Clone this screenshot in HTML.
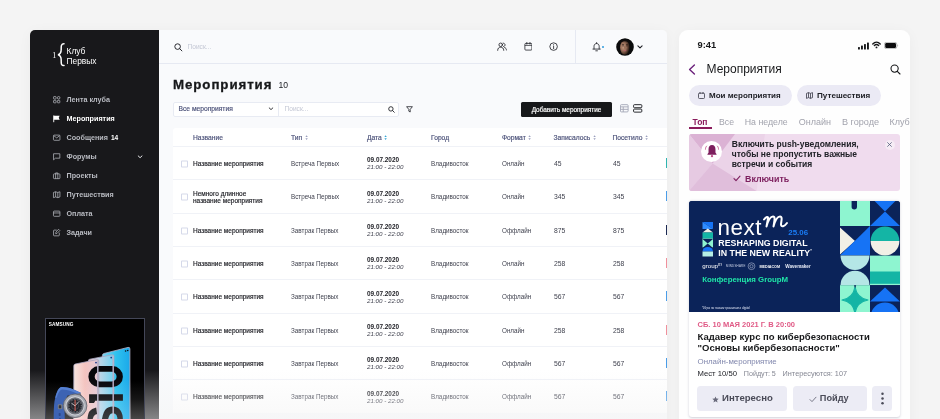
<!DOCTYPE html>
<html lang="ru">
<head>
<meta charset="utf-8">
<title>Мероприятия</title>
<style>
*{box-sizing:border-box;margin:0;padding:0}
html,body{width:940px;height:419px;overflow:hidden}
body{background:#f4f4f4;font-family:"Liberation Sans",sans-serif;position:relative;color:#17181a}
.a{position:absolute;white-space:nowrap}
.b{font-weight:bold}
/* sidebar */
#side{position:absolute;left:30px;top:30px;width:129px;height:389px;background:#18181b;border-radius:5px 0 0 0;overflow:hidden}
#side .mi{position:absolute;left:36.5px;font-size:7.2px;line-height:10px;font-weight:bold;color:#b9bbc2;white-space:nowrap}
#side .mi.on{color:#fff}
#side svg.ic{position:absolute;left:22.7px;width:7.4px;height:7.4px;overflow:visible;margin-top:0.3px}
/* main */
#main{position:absolute;left:159px;top:30px;width:508px;height:389px;background:#f9fafc;border-radius:0 5px 0 0;overflow:hidden}
#shd1{position:absolute;left:30px;top:30px;width:637px;height:400px;border-radius:5px 5px 0 0;box-shadow:0 2px 14px rgba(0,0,0,0.04)}
#shd2{position:absolute;left:679px;top:30px;width:231px;height:400px;border-radius:9px 9px 0 0;box-shadow:0 2px 14px rgba(0,0,0,0.04)}
#hdr{position:absolute;left:0;top:0;width:508px;height:33.5px;border-bottom:1px solid #e6e9f2}
#tbl{position:absolute;left:14px;top:98px;width:500px;height:285px;background:#fff;border-radius:3px 0 0 0}
.th{position:absolute;top:5px;font-size:6.7px;line-height:9px;color:#4a5078;white-space:nowrap;-webkit-text-stroke:0.16px #4a5078}
.th i{font-style:normal;color:#8a90b0;font-size:5px;margin-left:2px;position:relative;top:-0.5px}
.row{position:absolute;left:0;width:500px;height:33.4px;border-top:1px solid #f0f2f7}
.row .cb{position:absolute;left:8px;top:13px;transform:translateY(0.5px) rotate(0.02deg);width:6.5px;height:6.5px;border:0.8px solid #d5d9ea;border-radius:1px;background:#fff}
.row .c{position:absolute;font-size:6.3px;line-height:9px;white-space:nowrap;color:#3d3f4c;top:10.9px;transform:translateY(0.85px) rotate(0.02deg)}
.row .n{left:20px;color:#202127;font-size:6.5px;-webkit-text-stroke:0.16px #202127}
.row .n2{top:9px;line-height:7px}
.row .t{left:118px}
.row .d{left:194px;top:8.2px;line-height:7px}
.row .d b{color:#202127;font-size:6.4px}
.row .d span{font-size:6.2px;font-style:italic}
.row .g{left:258px}
.row .f{left:329px}
.row .z{left:380.5px;font-size:6.8px}
.row .p{left:439.5px;font-size:6.8px}
.row .bar{position:absolute;left:492.5px;top:11px;width:3px;height:10px}
/* mobile */
#mob{position:absolute;left:679px;top:30px;width:231px;height:400px;background:#fefefe;border-radius:9px 9px 0 0;overflow:hidden}
</style>
</head>
<body>
<div id="root" style="position:absolute;left:0;top:0;width:940px;height:419px;overflow:hidden;will-change:transform">
<div id="shd1"></div><div id="shd2"></div>
<div id="side">
<div class="a" style="left:22.3px;top:20.5px;font-family:'Liberation Serif',serif;font-size:8px;line-height:10px;color:#fff">1</div>
<svg class="a" style="left:26.6px;top:12.8px" width="8" height="24" viewBox="0 0 8 24"><path d="M7 0.8 C3.8 0.8 4.2 3.5 4.2 6.3 C4.2 9.3 3.8 11.1 1 11.7 C3.8 12.3 4.2 14.1 4.2 17.1 C4.2 19.9 3.8 22.6 7 22.6" fill="none" stroke="#fff" stroke-width="1.5" stroke-linecap="round"/></svg>
<div class="a" style="left:36.5px;top:15.5px;font-size:8.4px;line-height:10px;color:#fff">Клуб<br>Первых</div>

<svg class="ic" style="top:65.5px" viewBox="0 0 8 8"><g fill="none" stroke="#b9bbc2" stroke-width="0.8"><rect x="0.6" y="0.6" width="2.7" height="2.7" rx="0.6"/><circle cx="6.1" cy="1.95" r="1.4"/><rect x="0.6" y="4.7" width="2.7" height="2.7" rx="0.6"/><rect x="4.7" y="4.7" width="2.7" height="2.7" rx="0.6"/></g></svg>
<div class="mi" style="top:64.5px">Лента клуба</div>

<svg class="ic" style="top:84.5px" viewBox="0 0 8 8"><path d="M0.8 0.5 V7.8" stroke="#fff" stroke-width="1" fill="none"/><path d="M0.8 0.8 H7.2 L6.2 3 L7.2 5.2 H0.8 Z" fill="#fff"/></svg>
<div class="mi on" style="top:83.5px">Мероприятия</div>

<svg class="ic" style="top:103.5px" viewBox="0 0 8 8"><g fill="none" stroke="#b9bbc2" stroke-width="0.8"><rect x="0.5" y="1.2" width="7" height="5.6" rx="0.8"/><path d="M0.8 1.8 L4 4.2 L7.2 1.8"/></g></svg>
<div class="mi" style="top:102.5px">Сообщения <span style="color:#fff;font-size:6.6px;margin-left:1px">14</span></div>

<svg class="ic" style="top:122.5px" viewBox="0 0 8 8"><path d="M0.6 0.8 H7.4 V5.6 H2.6 L0.6 7.4 Z" fill="none" stroke="#b9bbc2" stroke-width="0.8" stroke-linejoin="round"/></svg>
<div class="mi" style="top:121.5px">Форумы</div>
<svg class="a" style="left:107px;top:124.7px" width="6" height="4" viewBox="0 0 6 4"><path d="M1.2 0.9 L3.1 2.7 L5 0.9" fill="none" stroke="#e6e7ea" stroke-width="1" stroke-linecap="round" stroke-linejoin="round"/></svg>

<svg class="ic" style="top:141.5px" viewBox="0 0 8 8"><g fill="none" stroke="#b9bbc2" stroke-width="0.8"><rect x="0.5" y="2" width="7" height="5.2" rx="0.8"/><path d="M2.8 2 V1 H5.2 V2 M2.8 2 V7.2 M5.2 2 V7.2"/></g></svg>
<div class="mi" style="top:140.5px">Проекты</div>

<svg class="ic" style="top:160.5px" viewBox="0 0 8 8"><g fill="none" stroke="#b9bbc2" stroke-width="0.8" stroke-linejoin="round"><path d="M0.5 1.6 L2.8 0.8 L5.2 1.6 L7.5 0.8 V6.4 L5.2 7.2 L2.8 6.4 L0.5 7.2 Z"/><path d="M2.8 0.8 V6.4 M5.2 1.6 V7.2"/></g></svg>
<div class="mi" style="top:159.5px">Путешествия</div>

<svg class="ic" style="top:179.5px" viewBox="0 0 8 8"><g fill="none" stroke="#b9bbc2" stroke-width="0.8"><rect x="0.5" y="1.2" width="7" height="5.6" rx="0.8"/><path d="M0.5 3.2 H7.5"/></g></svg>
<div class="mi" style="top:178.5px">Оплата</div>

<svg class="ic" style="top:198.5px" viewBox="0 0 8 8"><g fill="none" stroke="#b9bbc2" stroke-width="0.8" stroke-linejoin="round" stroke-linecap="round"><path d="M3.6 1.2 H1.3 Q0.6 1.2 0.6 1.9 V6.7 Q0.6 7.4 1.3 7.4 H6.1 Q6.8 7.4 6.8 6.7 V4.4"/><path d="M6.3 0.6 L7.4 1.7 L4.2 4.9 L2.9 5.1 L3.1 3.8 Z"/></g></svg>
<div class="mi" style="top:197.5px">Задачи</div>

</div>
<div id="main">
<div id="hdr">
<svg class="a" style="left:14.5px;top:12.5px" width="9" height="9" viewBox="0 0 9 9"><circle cx="3.6" cy="3.6" r="2.8" fill="none" stroke="#202127" stroke-width="0.95"/><path d="M5.7 5.7 L7.9 7.9" stroke="#202127" stroke-width="0.95" stroke-linecap="round"/></svg>
<div class="a" style="left:28.5px;top:12px;font-size:6.6px;line-height:10px;color:#c3c7d4">Поиск...</div>
<!-- users -->
<svg class="a" style="left:337.8px;top:12px" width="10.2" height="9.3" viewBox="0 0 11 10"><g fill="none" stroke="#202127" stroke-width="0.9" stroke-linecap="round"><circle cx="4" cy="3" r="1.9"/><path d="M0.7 9 C0.7 6.6 2.2 5.6 4 5.6 C5.8 5.6 7.3 6.6 7.3 9"/><path d="M6.6 1.2 C7.9 1.3 8.7 2.1 8.7 3.1 C8.7 4.1 7.9 4.8 7 4.9"/><path d="M8.2 5.9 C9.5 6.3 10.2 7.3 10.2 8.6"/></g></svg>
<!-- calendar -->
<svg class="a" style="left:364.6px;top:12px" width="8.8" height="8.8" viewBox="0 0 10 10"><g fill="none" stroke="#202127" stroke-width="0.9"><rect x="1" y="1.6" width="8" height="7.6" rx="1"/><path d="M1 3.9 H9" stroke-width="0.8"/><path d="M3.2 0.5 V2.4 M6.8 0.5 V2.4" stroke-linecap="round"/></g></svg>
<!-- info -->
<svg class="a" style="left:390.4px;top:12px" width="9.2" height="9.2" viewBox="0 0 10 10"><circle cx="5" cy="5" r="4.1" fill="none" stroke="#202127" stroke-width="0.9"/><path d="M5 4.5 V7.2" stroke="#202127" stroke-width="0.9" stroke-linecap="round"/><circle cx="5" cy="3" r="0.55" fill="#202127"/></svg>
<div class="a" style="left:416px;top:0;width:1px;height:33px;background:#e6e9f2"></div>
<!-- bell -->
<svg class="a" style="left:433.3px;top:11.6px" width="9.2" height="10.1" viewBox="0 0 10 11"><g fill="none" stroke="#202127" stroke-width="0.9" stroke-linecap="round" stroke-linejoin="round"><path d="M2.2 7.6 V4.6 C2.2 2.9 3.4 1.7 5 1.7 C6.6 1.7 7.8 2.9 7.8 4.6 V7.6"/><path d="M1 7.7 H9"/><path d="M5 0.6 V1.6"/><path d="M4.1 9.6 H5.9"/></g></svg>
<div class="a" style="left:442.5px;top:15.5px;width:2.4px;height:2.4px;border-radius:50%;background:#2f9bdc"></div>
<!-- avatar -->
<svg class="a" style="left:455.7px;top:6.8px" width="20" height="20" viewBox="0 0 20 20"><defs><clipPath id="avc"><circle cx="10" cy="10" r="8.8"/></clipPath><radialGradient id="avg" cx="0.36" cy="0.45" r="0.62"><stop offset="0" stop-color="#c49a80"/><stop offset="0.45" stop-color="#9a705a"/><stop offset="0.8" stop-color="#4e3529"/><stop offset="1" stop-color="#1a120e"/></radialGradient></defs><circle cx="10" cy="10" r="9.4" fill="#fff"/><circle cx="10" cy="10" r="8.8" fill="#0b0b0c"/><g clip-path="url(#avc)"><ellipse cx="9.9" cy="10.6" rx="4.9" ry="7.2" fill="url(#avg)"/><path d="M4.8 7 C4.6 1.6 15.2 1.6 15 7 C14 3.4 5.8 3.4 4.8 7 Z" fill="#0f0c0b"/><path d="M7 7.9 C7.6 7.5 8.6 7.5 9.1 7.9 M10.9 7.9 C11.4 7.5 12.4 7.5 13 7.9" stroke="#1f1410" stroke-width="0.7" fill="none"/><ellipse cx="8.1" cy="8.9" rx="0.9" ry="0.45" fill="#22150f"/><ellipse cx="11.9" cy="8.9" rx="0.9" ry="0.45" fill="#22150f"/><path d="M9.9 9 V11.6" stroke="#6a4636" stroke-width="0.6"/><ellipse cx="9.9" cy="13.6" rx="1.5" ry="0.7" fill="#b2606a"/></g></svg>
<svg class="a" style="left:478.4px;top:14.9px" width="6" height="4" viewBox="0 0 6 4"><path d="M0.9 0.8 L3 2.9 L5.1 0.8" fill="none" stroke="#202127" stroke-width="1.1" stroke-linecap="round" stroke-linejoin="round"/></svg>
</div>
<div class="a b" style="left:14px;top:45.7px;font-size:13.3px;line-height:18px;color:#17181a;letter-spacing:0.92px;-webkit-text-stroke:0.3px #17181a">Мероприятия</div>
<div class="a" style="left:119.5px;top:49px;font-size:8.6px;line-height:12px;color:#202127">10</div>
<!-- filters -->
<div class="a" style="left:14px;top:71.5px;width:226px;height:15px;background:#fff;border:1px solid #e8ebf3;border-radius:2px"></div>
<div class="a" style="left:119px;top:71.5px;width:1px;height:15px;background:#e8ebf3"></div>
<div class="a" style="left:19.5px;top:73.8px;font-size:6.7px;line-height:9px;color:#4a5078;-webkit-text-stroke:0.16px #4a5078">Все мероприятия</div>
<svg class="a" style="left:108.5px;top:77.3px" width="6" height="4" viewBox="0 0 6 4"><path d="M1.2 0.9 L3 2.6 L4.8 0.9" fill="none" stroke="#202127" stroke-width="0.9" stroke-linecap="round" stroke-linejoin="round"/></svg>
<div class="a" style="left:125.5px;top:74px;font-size:6.6px;line-height:10px;color:#c3c7d4">Поиск...</div>
<svg class="a" style="left:228.5px;top:75.5px" width="7" height="7" viewBox="0 0 7 7"><circle cx="2.9" cy="2.9" r="2.2" fill="none" stroke="#202127" stroke-width="0.9"/><path d="M4.6 4.6 L6.3 6.3" stroke="#202127" stroke-width="0.9" stroke-linecap="round"/></svg>
<svg class="a" style="left:247px;top:75.5px" width="7" height="7" viewBox="0 0 7 7"><path d="M0.6 0.7 H6.4 L4.2 3.4 V6 L2.8 5.2 V3.4 Z" fill="none" stroke="#202127" stroke-width="0.8" stroke-linejoin="round"/></svg>
<div class="a" style="left:362px;top:72px;width:91px;height:14.5px;background:#17181a;border-radius:1.5px"></div>
<div class="a" style="left:362px;top:74.7px;width:91px;text-align:center;font-size:6.45px;line-height:9px;color:#fff;-webkit-text-stroke:0.18px #fff">Добавить мероприятие</div>
<svg class="a" style="left:461.3px;top:74.2px" width="8.6" height="8.6" viewBox="0 0 9 9"><g fill="none" stroke="#a3a7b6" stroke-width="0.95"><rect x="0.5" y="0.7" width="8" height="7.6" rx="1"/><path d="M0.5 3 H8.5 M0.5 5.6 H8.5 M3.4 3 V8.3"/></g></svg>
<svg class="a" style="left:474.3px;top:74px" width="9.6" height="8.8" viewBox="0 0 10 9"><g fill="none" stroke="#202127" stroke-width="1"><rect x="0.6" y="0.6" width="8.6" height="3.2" rx="0.9"/><rect x="0.6" y="5.2" width="8.6" height="3.2" rx="0.9"/></g></svg>

<div id="tbl">
<div class="th" style="left:20px">Название</div>
<div class="th" style="left:118px">Тип<svg width="3.2" height="5.2" viewBox="0 0 3.2 6" style="margin-left:2.6px;position:relative;top:0.4px"><path d="M1.6 0.3 L3 2.3 H0.2 Z M1.6 5.7 L3 3.7 H0.2 Z" fill="#9a9fbd"/></svg></div>
<div class="th" style="left:194px">Дата<svg width="3.2" height="5.2" viewBox="0 0 3.2 6" style="margin-left:2.6px;position:relative;top:0.4px"><path d="M1.6 0.3 L3 2.3 H0.2 Z M1.6 5.7 L3 3.7 H0.2 Z" fill="#35a5d5"/></svg></div>
<div class="th" style="left:258px">Город</div>
<div class="th" style="left:329px">Формат<svg width="3.2" height="5.2" viewBox="0 0 3.2 6" style="margin-left:2.6px;position:relative;top:0.4px"><path d="M1.6 0.3 L3 2.3 H0.2 Z M1.6 5.7 L3 3.7 H0.2 Z" fill="#9a9fbd"/></svg></div>
<div class="th" style="left:380.5px">Записалось<svg width="3.2" height="5.2" viewBox="0 0 3.2 6" style="margin-left:2.6px;position:relative;top:0.4px"><path d="M1.6 0.3 L3 2.3 H0.2 Z M1.6 5.7 L3 3.7 H0.2 Z" fill="#9a9fbd"/></svg></div>
<div class="th" style="left:439.5px">Посетило<svg width="3.2" height="5.2" viewBox="0 0 3.2 6" style="margin-left:2.6px;position:relative;top:0.4px"><path d="M1.6 0.3 L3 2.3 H0.2 Z M1.6 5.7 L3 3.7 H0.2 Z" fill="#9a9fbd"/></svg></div>
<div class="row" style="top:18.00px"><div class="cb"></div><div class="c n">Название мероприятия</div><div class="c t">Встреча Первых</div><div class="c d"><b>09.07.2020</b><br><span>21:00 - 22:00</span></div><div class="c g">Владивосток</div><div class="c f">Онлайн</div><div class="c z">45</div><div class="c p">45</div><div class="bar" style="background:#2fb5b0"></div></div>
<div class="row" style="top:51.35px"><div class="cb"></div><div class="c n n2">Немного длинное<br>название мероприятия</div><div class="c t">Встреча Первых</div><div class="c d"><b>09.07.2020</b><br><span>21:00 - 22:00</span></div><div class="c g">Владивосток</div><div class="c f">Онлайн</div><div class="c z">345</div><div class="c p">345</div><div class="bar" style="background:#4a9de8"></div></div>
<div class="row" style="top:84.70px"><div class="cb"></div><div class="c n">Название мероприятия</div><div class="c t">Завтрак Первых</div><div class="c d"><b>09.07.2020</b><br><span>21:00 - 22:00</span></div><div class="c g">Владивосток</div><div class="c f">Оффлайн</div><div class="c z">875</div><div class="c p">875</div><div class="bar" style="background:#1c2a52"></div></div>
<div class="row" style="top:118.05px"><div class="cb"></div><div class="c n">Название мероприятия</div><div class="c t">Завтрак Первых</div><div class="c d"><b>09.07.2020</b><br><span>21:00 - 22:00</span></div><div class="c g">Владивосток</div><div class="c f">Онлайн</div><div class="c z">258</div><div class="c p">258</div><div class="bar" style="background:#f0909c"></div></div>
<div class="row" style="top:151.40px"><div class="cb"></div><div class="c n">Название мероприятия</div><div class="c t">Завтрак Первых</div><div class="c d"><b>09.07.2020</b><br><span>21:00 - 22:00</span></div><div class="c g">Владивосток</div><div class="c f">Оффлайн</div><div class="c z">567</div><div class="c p">567</div><div class="bar" style="background:#4a9de8"></div></div>
<div class="row" style="top:184.75px"><div class="cb"></div><div class="c n">Название мероприятия</div><div class="c t">Завтрак Первых</div><div class="c d"><b>09.07.2020</b><br><span>21:00 - 22:00</span></div><div class="c g">Владивосток</div><div class="c f">Онлайн</div><div class="c z">258</div><div class="c p">258</div><div class="bar" style="background:#f0909c"></div></div>
<div class="row" style="top:218.10px"><div class="cb"></div><div class="c n">Название мероприятия</div><div class="c t">Завтрак Первых</div><div class="c d"><b>09.07.2020</b><br><span>21:00 - 22:00</span></div><div class="c g">Владивосток</div><div class="c f">Оффлайн</div><div class="c z">567</div><div class="c p">567</div><div class="bar" style="background:#4a9de8"></div></div>
<div class="row" style="top:251.45px"><div class="cb"></div><div class="c n">Название мероприятия</div><div class="c t">Завтрак Первых</div><div class="c d"><b>09.07.2020</b><br><span>21:00 - 22:00</span></div><div class="c g">Владивосток</div><div class="c f">Оффлайн</div><div class="c z">567</div><div class="c p">567</div><div class="bar" style="background:#4a9de8"></div></div>
</div>
</div>
<div class="a" id="fade" style="left:30px;top:370px;width:637px;height:49px;background:linear-gradient(to bottom,rgba(243,243,243,0) 0%,rgba(243,243,243,0.5) 100%)"></div>
<div class="a" id="ad" style="left:45px;top:318.3px;width:99.5px;height:110px;background:linear-gradient(to bottom,#000 0,#000 62px,#161616 80px,#4a4a4a 101px);border:0.6px solid #444758;border-bottom:0;overflow:hidden">
<svg class="a" style="left:-0.6px;top:-0.6px" width="99.5" height="102" viewBox="0 0 99.5 102">
<defs>
<linearGradient id="scr1" x1="0" y1="0" x2="1" y2="0"><stop offset="0" stop-color="#f6e4df"/><stop offset="0.45" stop-color="#f4c3bf"/><stop offset="1" stop-color="#e3c9d6"/></linearGradient>
<linearGradient id="scr2" x1="0" y1="0" x2="1" y2="0"><stop offset="0" stop-color="#efc3c6"/><stop offset="0.45" stop-color="#bcd6e8"/><stop offset="1" stop-color="#6fd2f0"/></linearGradient>
<linearGradient id="scr3" x1="0" y1="0" x2="1" y2="0"><stop offset="0" stop-color="#7fd6f1"/><stop offset="0.5" stop-color="#2fc2ee"/><stop offset="1" stop-color="#1aa8ea"/></linearGradient>
<radialGradient id="wf" cx="0.5" cy="0.5" r="0.5"><stop offset="0" stop-color="#3a3d46"/><stop offset="0.58" stop-color="#2a2c33"/><stop offset="0.62" stop-color="#b9bcc4"/><stop offset="0.85" stop-color="#8b8e97"/><stop offset="1" stop-color="#5a5d66"/></radialGradient>
<linearGradient id="wfade" x1="0" y1="0" x2="0" y2="1"><stop offset="0" stop-color="#fff" stop-opacity="0"/><stop offset="1" stop-color="#fff" stop-opacity="0.22"/></linearGradient>
</defs>
<text x="3.7" y="7" font-family="Liberation Sans, sans-serif" font-size="4.7" font-weight="bold" fill="#fff" letter-spacing="0.12">SAMSUNG</text>
<!-- phone 3 -->
<path d="M57.4 36.4 Q57.4 34.9 58.9 34.5 L83 28.4 Q84.9 28 84.9 29.9 V102 H57.4 Z" fill="url(#scr3)" stroke="#b8b2c9" stroke-width="0.8"/>
<!-- phone 2 -->
<path d="M43.3 42 Q43.3 40.5 44.8 40.2 L67.3 35.8 Q68.9 35.5 68.9 37.2 V102 H43.3 Z" fill="url(#scr2)" stroke="#aaa4bf" stroke-width="0.8"/>
<!-- phone 1 -->
<path d="M28.8 46.8 Q28.8 45.3 30.3 45 L52.2 40.6 Q53.8 40.3 53.8 42 V102 H28.8 Z" fill="url(#scr1)" stroke="#aaa4bf" stroke-width="0.8"/>
<circle cx="51" cy="43.6" r="0.9" fill="#1c3a8a"/><circle cx="66.2" cy="38.6" r="0.9" fill="#1c3a8a"/><circle cx="80.6" cy="32" r="0.8" fill="#0b0b12"/><circle cx="82.7" cy="31.5" r="0.8" fill="#0b0b12"/>
<!-- S10 -->
<path fill-rule="evenodd" fill="#07070b" d="M53.9 47.1 H67.4 A10.5 10.55 0 0 1 67.4 68.2 H53.9 A10.5 10.55 0 0 1 53.9 47.1 Z M54.6 52.8 A4.9 4.85 0 0 0 54.6 62.5 H66.7 A4.9 4.85 0 0 0 66.7 52.8 Z"/>
<path fill="#07070b" d="M44.1 75.3 H77.9 V81.7 H50 C50 82.7 49.5 83.4 48.8 83.9 L44.1 83.9 Z"/>
<g transform="translate(77.9,117.6) rotate(-90) scale(0.954,1)"><text x="0" y="0" font-family="Liberation Sans, sans-serif" font-size="50" font-weight="bold" fill="#07070b">S</text></g>
<!-- phone edges over text -->
<path d="M52.8 41.5 V102" stroke="#a39db8" stroke-width="1.4"/><path d="M52.8 41.5 V102" stroke="#e9e4f2" stroke-width="0.4"/>
<path d="M68.2 36.6 V102" stroke="#a9a3be" stroke-width="1.3"/><path d="M68.2 36.6 V102" stroke="#ecd2e2" stroke-width="0.4"/>
<rect x="28" y="60" width="58" height="42" fill="url(#wfade)"/>
<!-- watch -->
<g transform="translate(1.2,0)">
<path d="M7.6 102 C7.4 92 7.6 84 9 79 C10.5 73 12.5 68.3 15.5 68 C21 67.6 29 70.8 34.3 73.6 L33.2 79.6 C29 77.6 24.5 76.2 21.6 76.6 C19.6 78.8 18.6 84 18.4 90 L18.6 102 Z" fill="#3d63b3"/>
<path d="M15.5 68 C21 67.6 29 70.8 34.3 73.6 L33.8 76 C28.5 73.4 21 70.4 16 70.6 C13.5 71 12 74 10.6 78.5 L9 79 C10.5 73 12.5 68.3 15.5 68 Z" fill="#5580d2"/>
<path d="M22 77 L34 74 L37 79 L24 83 Z" fill="#6d7079"/>
<circle cx="28.9" cy="86.8" r="11.8" fill="#a9acb4"/>
<circle cx="28.9" cy="86.8" r="11.8" fill="none" stroke="#5d6069" stroke-width="0.8"/>
<circle cx="28.9" cy="86.8" r="9.6" fill="#d4d6dc"/>
<circle cx="28.9" cy="86.8" r="8.6" fill="#6e717a"/>
<circle cx="28.9" cy="86.8" r="7" fill="#24262d"/>
<circle cx="28.9" cy="86.8" r="6.2" fill="none" stroke="#cfd2d9" stroke-width="0.9" stroke-dasharray="0.45 1.17"/>
<circle cx="28.9" cy="86.8" r="3.6" fill="none" stroke="#5b5e68" stroke-width="0.5"/>
<path d="M28.9 86.8 L32.8 82.4" stroke="#f3f3f5" stroke-width="0.7"/><path d="M28.9 81 V92" stroke="#ef6a5a" stroke-width="0.9"/><path d="M28.9 86.8 L25.2 84.2" stroke="#f3f3f5" stroke-width="0.7"/>
<rect x="11.6" y="85.3" width="4.6" height="5" rx="1" fill="#7a7d86"/><rect x="12.6" y="86.3" width="2.4" height="3" rx="0.6" fill="#33353c"/>
<rect x="12.5" y="94" width="2" height="3" rx="0.7" fill="#2d4a8c"/><rect x="12.8" y="99" width="2" height="3" rx="0.7" fill="#2d4a8c"/>
</g>
</svg>
</div>
<div id="mob"><div class="a" style="left:1px;top:0;width:230px;height:400px">
<div class="a b" style="left:17.5px;top:9.1px;font-size:9.3px;line-height:12px;color:#17181a">9:41</div>
<!-- signal -->
<svg class="a" style="left:178px;top:11.6px" width="11" height="8" viewBox="0 0 11 8"><g fill="#17181a"><rect x="0" y="5" width="1.9" height="2.6" rx="0.5"/><rect x="3" y="3.6" width="1.9" height="4" rx="0.5"/><rect x="6" y="2" width="1.9" height="5.6" rx="0.5"/><rect x="9" y="0.4" width="1.9" height="7.2" rx="0.5"/></g></svg>
<!-- wifi -->
<svg class="a" style="left:192px;top:11.3px" width="9" height="8" viewBox="0 0 9 8"><g fill="none" stroke="#17181a" stroke-width="1.45" stroke-linecap="round"><path d="M0.8 2.9 C2.9 0.8 6.1 0.8 8.2 2.9"/><path d="M2.4 4.6 C3.6 3.4 5.4 3.4 6.6 4.6"/></g><circle cx="4.5" cy="6.4" r="0.95" fill="#17181a"/></svg>
<!-- battery -->
<svg class="a" style="left:204.3px;top:11.7px" width="15" height="7" viewBox="0 0 15 7"><rect x="0.4" y="0.4" width="12.4" height="6.2" rx="1.8" fill="none" stroke="#17181a" stroke-opacity="0.4" stroke-width="0.7"/><rect x="1.2" y="1.1" width="10.8" height="4.8" rx="1.2" fill="#0c0c0e"/><path d="M13.6 2.4 V4.6 C14.3 4.3 14.3 2.7 13.6 2.4Z" fill="#17181a" fill-opacity="0.5"/></svg>
<!-- nav -->
<svg class="a" style="left:8px;top:34px" width="8" height="11" viewBox="0 0 8 11"><path d="M6.4 1 L1.6 5.5 L6.4 10" fill="none" stroke="#6a1f7a" stroke-width="1.4" stroke-linecap="round" stroke-linejoin="round"/></svg>
<div class="a" style="left:26.5px;top:31.5px;font-size:12px;line-height:15px;color:#17181a">Мероприятия</div>
<svg class="a" style="left:209.5px;top:34px" width="11" height="11" viewBox="0 0 11 11"><circle cx="4.6" cy="4.6" r="3.6" fill="none" stroke="#17181a" stroke-width="1.1"/><path d="M7.3 7.3 L10 10" stroke="#17181a" stroke-width="1.1" stroke-linecap="round"/></svg>
<!-- chips -->
<div class="a" style="left:8.5px;top:55px;width:103px;height:20.5px;border-radius:10.5px;background:#ebeaf5"></div>
<svg class="a" style="left:17.8px;top:61.7px" width="7" height="7" viewBox="0 0 7 7"><g fill="none" stroke="#3a3a48" stroke-width="0.8"><rect x="0.5" y="1.2" width="6" height="5.3" rx="0.9"/><path d="M2 0.4 V1.6 M5 0.4 V1.6" stroke-linecap="round"/></g></svg>
<div class="a b" style="left:29px;top:60.5px;font-size:8px;line-height:10px;color:#202127">Мои мероприятия</div>
<div class="a" style="left:117px;top:55px;width:84px;height:20.5px;border-radius:10.5px;background:#ebeaf5"></div>
<svg class="a" style="left:126.3px;top:61.7px" width="7" height="7" viewBox="0 0 7 7"><g fill="none" stroke="#3a3a48" stroke-width="0.8" stroke-linejoin="round"><path d="M0.5 1.4 L2.5 0.6 L4.5 1.4 L6.5 0.6 V5.6 L4.5 6.4 L2.5 5.6 L0.5 6.4 Z"/><path d="M2.5 0.6 V5.6 M4.5 1.4 V6.4"/></g></svg>
<div class="a b" style="left:137px;top:60.5px;font-size:8.1px;line-height:10px;color:#202127">Путешествия</div>
<!-- tabs -->
<div class="a b" style="left:12.5px;top:86px;font-size:8.5px;line-height:12px;color:#8a1c5c">Топ</div>
<div class="a" style="left:9px;top:97.3px;width:23px;height:1.5px;background:#8a1c5c"></div>
<div class="a" style="left:39px;top:86px;font-size:8.7px;line-height:12px;color:#a2a3ad">Все</div>
<div class="a" style="left:64.7px;top:86px;font-size:8.8px;line-height:12px;color:#a2a3ad">На неделе</div>
<div class="a" style="left:118.8px;top:86px;font-size:9px;line-height:12px;color:#a2a3ad">Онлайн</div>
<div class="a" style="left:162px;top:86px;font-size:9.1px;line-height:12px;color:#a2a3ad">В городе</div>
<div class="a" style="left:209.5px;top:86px;font-size:9px;line-height:12px;color:#a2a3ad">Клубы</div>
<!-- push banner -->
<div class="a" id="push" style="left:9px;top:104.2px;width:211px;height:57px;border-radius:3px;background:#f0dcee;overflow:hidden">
<svg class="a" style="left:0;top:0" width="211" height="57" viewBox="0 0 211 57"><polygon points="0,0 76,0 67.5,57 0,57" fill="#ebd3e8"/><polygon points="0,0 46,0 23.6,29.4" fill="#dbb2d4"/><polygon points="0,0 23.6,29.4 0,57" fill="#e6cae2"/><polygon points="0,57 23.6,29.4 67.5,57" fill="#e0bedb"/></svg>
<div class="a" style="left:12px;top:6.5px;width:21px;height:21px;border-radius:50%;background:#fff"></div>
<svg class="a" style="left:13.5px;top:7.6px" width="18" height="18" viewBox="0 0 14 14"><path d="M7 2.3 C5.2 2.3 4.3 3.8 4.3 5.6 V8.2 C4.3 8.9 3.4 9.2 3.4 9.9 H10.6 C10.6 9.2 9.7 8.9 9.7 8.2 V5.6 C9.7 3.8 8.8 2.3 7 2.3 Z" fill="#7d1f5e"/><circle cx="7" cy="11" r="0.9" fill="#c0508a"/><path d="M2.8 3.2 C2.2 3.9 1.9 4.7 1.9 5.6 M11.2 3.2 C11.8 3.9 12.1 4.7 12.1 5.6" fill="none" stroke="#c0508a" stroke-width="0.7" stroke-linecap="round"/></svg>
<div class="a b" style="left:42.8px;top:4.9px;font-size:8.5px;line-height:10px;color:#202127">Включить push-уведомления,<br>чтобы не пропустить важные<br>встречи и события</div>
<svg class="a" style="left:43.5px;top:41px" width="8" height="7" viewBox="0 0 8 7"><path d="M1 3.6 L3 5.6 L7 1.2" fill="none" stroke="#7d1f5e" stroke-width="1.1" stroke-linecap="round" stroke-linejoin="round"/></svg>
<div class="a b" style="left:56px;top:38.5px;font-size:8.9px;line-height:12px;color:#7d1f5e">Включить</div>
<div class="a" style="left:195.5px;top:5.5px;width:10px;height:10px;border-radius:50%;background:#f6ecf5"></div>
<svg class="a" style="left:198px;top:8px" width="5" height="5" viewBox="0 0 5 5"><path d="M0.6 0.6 L4.4 4.4 M4.4 0.6 L0.6 4.4" stroke="#56607e" stroke-width="0.8" stroke-linecap="round"/></svg>
</div>
<!-- card -->
<div class="a" id="card" style="left:9px;top:171px;width:211px;height:216px;border-radius:3px;background:#fff;box-shadow:0 0.5px 2.5px rgba(40,40,80,0.22);overflow:hidden">
<div id="cimg" class="a" style="left:0;top:0;width:211px;height:111px;background:#0b2359;overflow:hidden">
<svg class="a" style="left:0;top:0" width="211" height="111" viewBox="0 0 211 111">
<rect width="211" height="111" fill="#0b2359"/>
<!-- stripe logo -->
<g>
<polygon points="13.5,21 24,21 24,28 13.5,21" fill="#1673f5"/>
<polygon points="13.5,21 24,28 24,28 13.5,28" fill="#2f8cff"/>
<polygon points="13.5,31.5 18.75,27.5 24,31.5" fill="#f2f0e6"/>
<rect x="13.5" y="31.5" width="10.5" height="6" fill="#14b5a5"/>
<rect x="13.5" y="37.5" width="10.5" height="9" fill="#8ef5d0"/>
<polygon points="13.5,38 24,38 18.75,42.5" fill="#0b2359"/>
<polygon points="13.5,47 24,47 18.75,42.5" fill="#0b2359"/>
<path d="M13.5 50.5 A5.25 4.5 0 0 1 24 50.5 Z" fill="#1673f5"/>
<rect x="13.5" y="50.5" width="10.5" height="5" fill="#b5efe6"/>
</g>
<text x="28.6" y="33.9" font-family="Liberation Sans, sans-serif" font-size="22.4" fill="#fff" letter-spacing="0.5">next</text>
<path d="M75 18.5 C77 15.5 79.5 15 79 17.5 L77.5 25.5 C79 20 81.5 15.5 84 15.5 C86.5 15.5 85.5 19 84.5 25.5 C86 20 88.5 15.5 91 15.5 C94 15.5 92 21 92 23.5 C92 26.5 95.5 25.5 98 22" fill="none" stroke="#fff" stroke-width="2" stroke-linecap="round" stroke-linejoin="round"/>
<text x="99.3" y="34.4" font-family="Liberation Sans, sans-serif" font-size="7.9" font-weight="bold" fill="#1a7cf5">25.06</text>
<text x="29.3" y="45.4" font-family="Liberation Sans, sans-serif" font-size="8.8" font-weight="bold" fill="#fff">RESHAPING DIGITAL</text>
<text x="29.3" y="55" font-family="Liberation Sans, sans-serif" font-size="8.8" font-weight="bold" fill="#fff">IN THE NEW REALITY<tspan font-size="4" dy="-4">*</tspan></text>
<!-- logos -->
<text x="13.2" y="66.6" font-family="Liberation Sans, sans-serif" font-size="6.2" fill="#fff">group<tspan font-size="4.5" dy="-1.8" font-style="italic">m</tspan></text>
<text x="37" y="66.2" font-family="Liberation Sans, sans-serif" font-size="2.9" fill="#cfd6ea" letter-spacing="0.25">MINDSHARE</text>
<circle cx="62.5" cy="65.2" r="3.4" fill="none" stroke="#cfd6ea" stroke-width="0.5"/><circle cx="62.5" cy="65.2" r="1.6" fill="none" stroke="#cfd6ea" stroke-width="0.5"/>
<text x="70.5" y="66.6" font-family="Liberation Sans, sans-serif" font-size="3.7" font-weight="bold" fill="#fff">MEDIACOM</text>
<text x="96.3" y="66.6" font-family="Liberation Sans, sans-serif" font-size="4.6" font-weight="bold" fill="#e8ecf7">Wavemaker</text>
<text x="13.2" y="80.6" font-family="Liberation Sans, sans-serif" font-size="7.86" font-weight="bold" fill="#1fe5a8">Конференция GroupM</text>
<text x="13" y="108.2" font-family="Liberation Sans, sans-serif" font-size="3" font-style="italic" fill="#dfe5f5">*Игра по новым правилам в digital</text>
<!-- pattern -->
<g>
<!-- left col -->
<rect x="151" y="-4.6" width="30" height="29.6" fill="#8ef5d0"/>
<path d="M162.6 -5 H168 V5.8 A2.7 2.7 0 0 1 162.6 5.8 Z" fill="#0b2359"/>
<rect x="151" y="25" width="30" height="29.6" fill="#0b2359"/>
<polygon points="151,26.5 166,40 151,53.5" fill="#f2f0e6"/>
<polygon points="181,25 181,54.6 151,54.6" fill="#1673f5"/>
<rect x="151" y="54.6" width="30" height="29.6" fill="#0b2359"/>
<path d="M151.5 54.6 H180.5 A14.5 14.5 0 0 1 151.5 54.6 Z" fill="#b5e6e6"/>
<path d="M151.5 84.2 A14.5 14.5 0 0 1 180.5 84.2 Z" fill="#b5e6e6"/>
<rect x="151" y="84.2" width="30" height="30" fill="#8ef5d0"/>
<path d="M166 86 C167.3 93.5 171.5 97.7 179 99 C171.5 100.3 167.3 104.5 166 112 C164.7 104.5 160.5 100.3 153 99 C160.5 97.7 164.7 93.5 166 86 Z" fill="#14b5a5" stroke="#14b5a5" stroke-width="1.2" stroke-linejoin="round"/>
<path d="M165 84.2 H167.2 L166.1 87.2 Z" fill="#0b2359"/>
<!-- right col -->
<rect x="181" y="-4.6" width="30" height="29.6" fill="#0b2359"/>
<polygon points="181,-4.6 211,-4.6 196,10.5" fill="#1673f5"/>
<polygon points="181,25 211,25 196,10.5" fill="#1673f5"/>
<rect x="181" y="25" width="30" height="29.6" fill="#0b2359"/>
<path d="M181.6 40 A14.4 14.4 0 0 1 210.4 40 Z" fill="#14b5a5"/>
<path d="M181.6 40 A14.4 14.4 0 0 0 210.4 40 Z" fill="#f2f0e6"/>
<rect x="181" y="54.6" width="30" height="29.6" fill="#8ef5d0"/>
<rect x="181" y="70.5" width="30" height="12.3" fill="#14b5a5"/>
<rect x="181" y="84.2" width="30" height="30" fill="#0b2359"/>
<polygon points="181,100.5 211,100.5 196,86.5" fill="#1673f5"/>
<path d="M181.6 116 A14.4 14.4 0 0 1 210.4 116 Z" fill="#1673f5"/>
</g>
</svg>
</div>
<div class="a b" style="left:8.5px;top:119px;font-size:7.5px;line-height:10px;color:#e05a86">СБ. 10 МАЯ 2021 Г. В 20:00</div>
<div class="a b" style="left:8.5px;top:130.1px;font-size:9.5px;line-height:11.2px;color:#17181a">Кадавер курс по кибербезопасности<br>"Основы кибербезопасности"</div>
<div class="a" style="left:8.5px;top:155.8px;font-size:7.9px;line-height:10px;color:#8187ad">Онлайн-мероприятие</div>
<div class="a" style="left:8.5px;top:168px;font-size:7.7px;line-height:10px;color:#202127">Мест 10/50</div>
<div class="a" style="left:54.8px;top:168px;font-size:7.15px;line-height:10px;color:#858793">Пойдут: 5</div>
<div class="a" style="left:93.6px;top:168px;font-size:7.3px;line-height:10px;color:#858793">Интересуются: 107</div>
<div class="a" style="left:8.2px;top:185.2px;width:90px;height:25px;border-radius:3.5px;background:#ececf5"></div>
<div class="a" style="left:104px;top:185.2px;width:73.5px;height:25px;border-radius:3.5px;background:#ececf5"></div>
<div class="a" style="left:183px;top:185.2px;width:20px;height:25px;border-radius:3.5px;background:#ececf5"></div>
<svg class="a" style="left:23px;top:194.5px" width="7" height="7" viewBox="0 0 7 7"><path d="M3.5 0.4 L4.4 2.5 L6.7 2.7 L5 4.2 L5.5 6.5 L3.5 5.3 L1.5 6.5 L2 4.2 L0.3 2.7 L2.6 2.5 Z" fill="#6a6b7c"/></svg>
<div class="a b" style="left:33px;top:191px;font-size:9.6px;line-height:12px;color:#4a4b58">Интересно</div>
<svg class="a" style="left:120px;top:194.5px" width="8" height="7" viewBox="0 0 8 7"><path d="M1 3.6 L3 5.6 L7 1.2" fill="none" stroke="#6a6b7c" stroke-width="0.9" stroke-linecap="round" stroke-linejoin="round"/></svg>
<div class="a b" style="left:130.8px;top:191px;font-size:9.2px;line-height:12px;color:#4a4b58">Пойду</div>
<svg class="a" style="left:191.5px;top:191px" width="3" height="13" viewBox="0 0 3 13"><g fill="#4a4b58"><circle cx="1.5" cy="1.8" r="1.25"/><circle cx="1.5" cy="6.5" r="1.25"/><circle cx="1.5" cy="11.2" r="1.25"/></g></svg>
</div>
</div></div>
</div>
</body>
</html>
